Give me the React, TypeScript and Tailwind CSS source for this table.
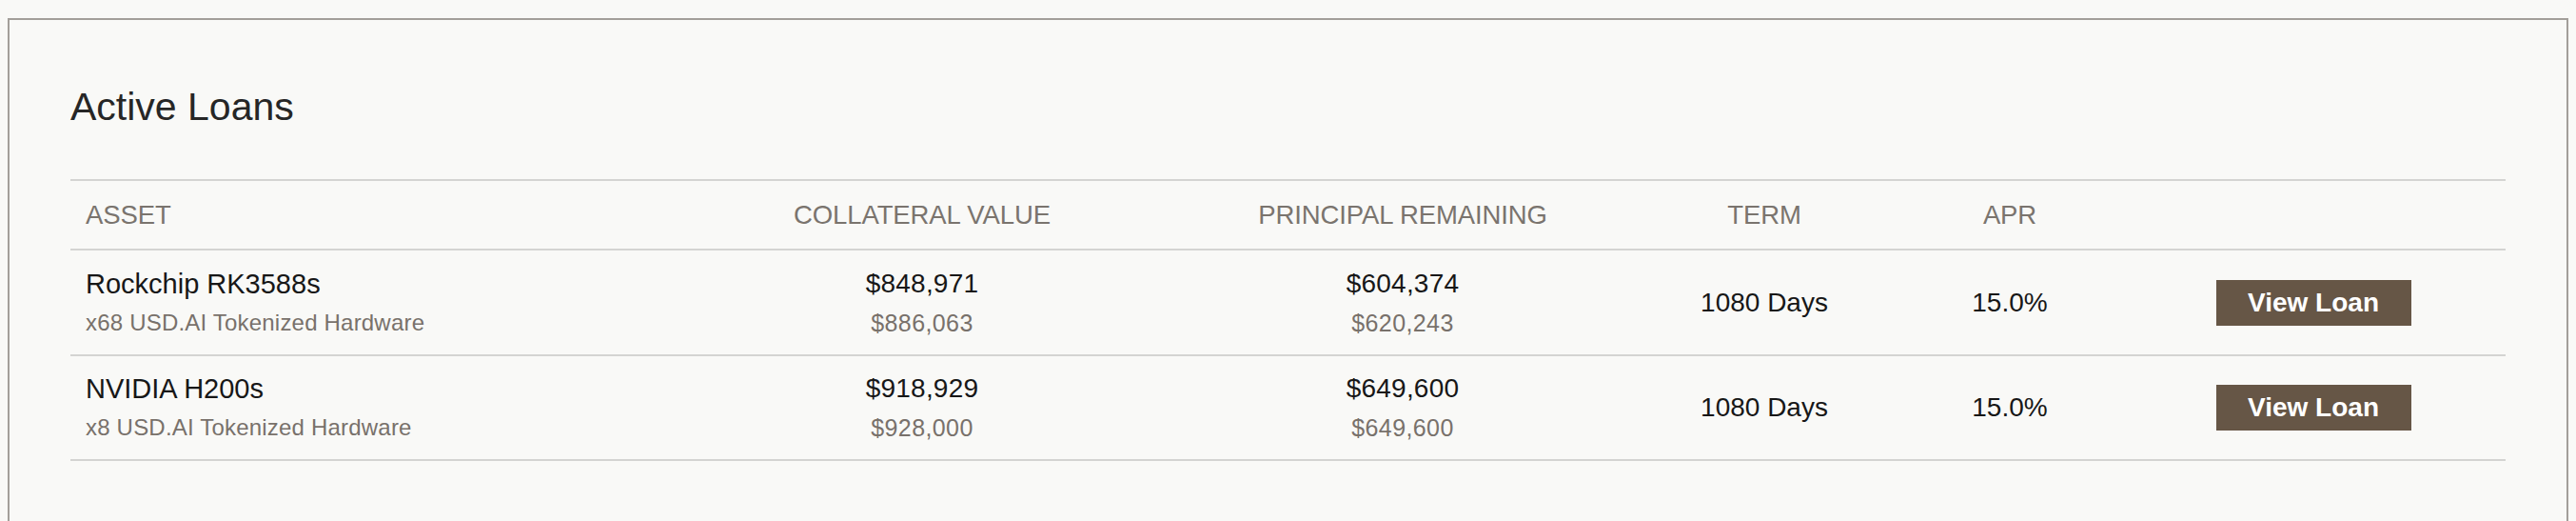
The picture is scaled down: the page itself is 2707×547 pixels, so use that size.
import React from "react";

type Loan = {
  name: string;
  sub: string;
  collateral: string;
  collateralSub: string;
  principal: string;
  principalSub: string;
  term: string;
  apr: string;
};

const loans: Loan[] = [
  {
    name: "Rockchip RK3588s",
    sub: "x68 USD.AI Tokenized Hardware",
    collateral: "$848,971",
    collateralSub: "$886,063",
    principal: "$604,374",
    principalSub: "$620,243",
    term: "1080 Days",
    apr: "15.0%",
  },
  {
    name: "NVIDIA H200s",
    sub: "x8 USD.AI Tokenized Hardware",
    collateral: "$918,929",
    collateralSub: "$928,000",
    principal: "$649,600",
    principalSub: "$649,600",
    term: "1080 Days",
    apr: "15.0%",
  },
];

const grid =
  "grid grid-cols-[628px_534px_476px_284px_232px_406px] items-center";

function AssetCell({ a, b }: { a: string; b: string }) {
  return (
    <div className="flex flex-col items-start pl-4 pt-[1px]">
      <div className="text-[29px] leading-[32px] text-[#171717] tracking-[0px]">{a}</div>
      <div className="mt-[9px] text-[24px] leading-[32px] text-[#78716b] tracking-[0.2px]">{b}</div>
    </div>
  );
}

function MoneyCell({ a, b }: { a: string; b: string }) {
  return (
    <div className="flex flex-col items-center pt-[1px]">
      <div className="text-[28px] leading-[32px] text-[#171717] tracking-[0.2px]">{a}</div>
      <div className="mt-[9px] text-[25px] leading-[32px] text-[#78716b] tracking-[0.4px]">{b}</div>
    </div>
  );
}

export default function App() {
  return (
    <div
      className="min-h-screen bg-[#f9f9f7] pt-[19px] px-[8px] overflow-hidden"
      style={{ fontFamily: '"Liberation Sans", Arial, sans-serif' }}
    >
      <div className="border-2 border-[#a39f9a] bg-[#f9f9f7] px-16 pt-[71px] pb-16">
        <h1 className="text-[41px] leading-[41px] h-[41px] text-[#262626] font-normal">
          Active Loans
        </h1>
        <div className="mt-[55px]">
          <div className={`${grid} h-[75px] border-y-2 border-[#d4d4d2] text-[27.5px] text-[#7a746e] tracking-[-0.1px]`}>
            <div className="pl-4">ASSET</div>
            <div className="text-center">COLLATERAL VALUE</div>
            <div className="text-center">PRINCIPAL REMAINING</div>
            <div className="text-center">TERM</div>
            <div className="text-center">APR</div>
            <div />
          </div>
          {loans.map((l, i) => (
            <div
              key={l.name}
              className={`${grid} ${i === 0 ? "h-[111px]" : "h-[110px]"} border-b-2 border-[#d4d4d2]`}
            >
              <AssetCell a={l.name} b={l.sub} />
              <MoneyCell a={l.collateral} b={l.collateralSub} />
              <MoneyCell a={l.principal} b={l.principalSub} />
              <div className="text-center text-[28px] text-[#171717]">{l.term}</div>
              <div className="text-center text-[28px] text-[#171717]">{l.apr}</div>
              <div className="flex justify-center">
                <button className="w-[205px] h-[48px] bg-[#665646] text-white text-[28px] font-bold flex items-center justify-center">
                  View Loan
                </button>
              </div>
            </div>
          ))}
        </div>
      </div>
    </div>
  );
}
